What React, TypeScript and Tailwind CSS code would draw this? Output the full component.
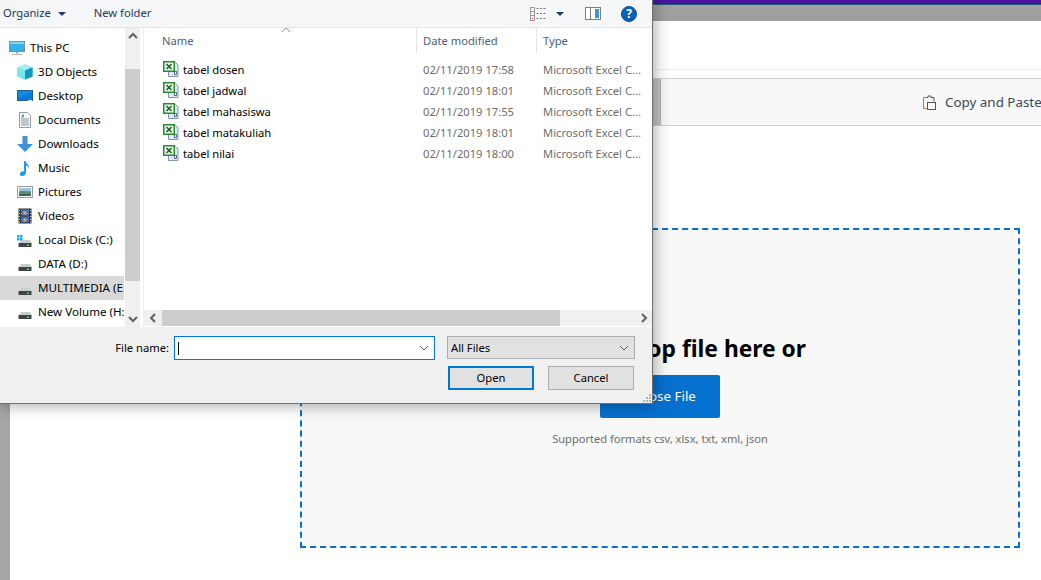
import type { ReactNode } from 'react';

const Chevron = ({ d, stroke = '#606060', width = 2 }: { d: string; stroke?: string; width?: number }) => (
  <svg className="w-[10px] h-[10px]" viewBox="0 0 10 10" fill="none" stroke={stroke} strokeWidth={width}>
    <path d={d} />
  </svg>
);

const ExcelIcon = () => (
  <svg className="w-4 h-4 shrink-0" viewBox="0 0 16 16">
    <path d="M5.500 1.500h7l2.500 2.500v11.500H5.500z" fill="#dfe8f5" stroke="#7f93b3" />
    <path d="M11 12h3" stroke="#6b88b5" />
    <rect x="11.500" y="10.500" width="2" height="3" fill="#fff" stroke="#3c5278" strokeWidth="0.8" />
    <rect x="0.750" y="0.750" width="10.500" height="9.500" fill="#eef8e6" stroke="#2c8a34" strokeWidth="1.500" />
    <path d="M3.500 3l5 5M8.500 3l-5 5" stroke="#14602a" strokeWidth="1.500" />
  </svg>
);

const PcIcon = () => (
  <svg className="w-4 h-4 shrink-0" viewBox="0 0 16 16">
    <rect x="0.500" y="1.500" width="15" height="10" fill="#35b2ea" stroke="#7c8c99" />
    <rect x="1" y="2" width="14" height="2" fill="#7fd4f5" />
    <path d="M7 12h2v1.500H7z" fill="#9aa7b0" />
    <path d="M3 14h10v1H3z" fill="#a9b5bd" />
  </svg>
);

const CubeIcon = () => (
  <svg className="w-4 h-4 shrink-0" viewBox="0 0 16 16">
    <path d="M8 .5l7.500 3v9L8 15.500.5 12.500v-9z" fill="#2fc0d8" />
    <path d="M.5 3.500L8 6.500v9L.5 12.500z" fill="#7fe3ee" />
    <path d="M8 .5l7.500 3L8 6.500.5 3.500z" fill="#a4eef5" />
    <path d="M8 6.500l7.500-3v9L8 15.500z" fill="#129ab8" />
  </svg>
);

const DesktopIcon = () => (
  <svg className="w-4 h-4 shrink-0" viewBox="0 0 16 16">
    <rect x="0.500" y="2.500" width="15" height="10" fill="#0f8fe8" stroke="#2a5a85" />
    <path d="M1 10l14-6v8H1z" fill="#0a78d6" />
    <path d="M11 12h4v1h-4z" fill="#cfe3f2" />
  </svg>
);

const DocIcon = () => (
  <svg className="w-4 h-4 shrink-0" viewBox="0 0 16 16">
    <path d="M2.500.5h8l3 3v12h-11z" fill="#fff" stroke="#8f9aa5" />
    <path d="M4 5h3M4 7h8M4 9h8M4 11h8M4 13h8" stroke="#7c8ea3" />
    <path d="M5 2.500h2v2H5z" fill="#3d8fd8" />
  </svg>
);

const DownloadIcon = () => (
  <svg className="w-4 h-4 shrink-0" viewBox="0 0 16 16">
    <path d="M5.500 0h5v8H16l-8 8-8-8h5.500z" fill="#3f93dc" />
  </svg>
);

const MusicIcon = () => (
  <svg className="w-4 h-4 shrink-0" viewBox="0 0 16 16">
    <path d="M7 1h1.500c.5 2.500 4 3.500 3.500 8-.3-2-2-3.500-3-3.500V12.500C9 14.500 7 16 5 16s-2.500-1.500-2-2.500C3.500 12 5.500 11 7 11.500z" fill="#1d9be8" />
  </svg>
);

const PictureIcon = () => (
  <svg className="w-4 h-4 shrink-0" viewBox="0 0 16 16">
    <rect x="0.500" y="2.500" width="15" height="11" fill="#fff" stroke="#9a9a9a" />
    <rect x="2" y="4" width="12" height="4" fill="#9cc3dc" />
    <path d="M2 8c3-2 6 0 12-1v5H2z" fill="#5e8a70" />
    <path d="M2 10h12v2H2z" fill="#46606a" />
  </svg>
);

const VideoIcon = () => (
  <svg className="w-4 h-4 shrink-0" viewBox="0 0 16 16">
    <rect x="1.500" y="0.500" width="13" height="15" fill="#333" />
    <rect x="4" y="1.500" width="8" height="6" fill="#4a76c4" />
    <rect x="4" y="8.500" width="8" height="6" fill="#3f6fd0" />
    <circle cx="8" cy="5" r="1.800" fill="#e0b030" />
    <circle cx="8" cy="12" r="1.800" fill="#d8a838" />
    <path d="M2.500 2v1M2.500 5v1M2.500 8v1M2.500 11v1M2.500 13.500v1M13.500 2v1M13.500 5v1M13.500 8v1M13.500 11v1M13.500 13.500v1" stroke="#ddd" />
  </svg>
);

const DriveIcon = ({ windows = false }: { windows?: boolean }) => (
  <svg className="w-4 h-4 shrink-0" viewBox="0 0 16 16">
    <path d="M2 11l2-3h9l2 3z" fill="#c9ccce" />
    <rect x="1.500" y="11" width="13" height="4" rx="0.500" fill="#3f4446" />
    <rect x="10" y="12.500" width="2" height="1.500" fill="#4ddb4d" />
    {windows && (
      <g fill="#16a8ee">
        <rect x="0" y="3" width="2.500" height="2.500" />
        <rect x="3" y="3" width="2.500" height="2.500" />
        <rect x="0" y="6" width="2.500" height="2.500" />
        <rect x="3" y="6" width="2.500" height="2.500" />
      </g>
    )}
  </svg>
);

const navItems: { label: string; icon: ReactNode; top?: boolean; selected?: boolean }[] = [
  { label: 'This PC', icon: <PcIcon />, top: true },
  { label: '3D Objects', icon: <CubeIcon /> },
  { label: 'Desktop', icon: <DesktopIcon /> },
  { label: 'Documents', icon: <DocIcon /> },
  { label: 'Downloads', icon: <DownloadIcon /> },
  { label: 'Music', icon: <MusicIcon /> },
  { label: 'Pictures', icon: <PictureIcon /> },
  { label: 'Videos', icon: <VideoIcon /> },
  { label: 'Local Disk (C:)', icon: <DriveIcon windows /> },
  { label: 'DATA (D:)', icon: <DriveIcon /> },
  { label: 'MULTIMEDIA (E:)', icon: <DriveIcon />, selected: true },
  { label: 'New Volume (H:)', icon: <DriveIcon /> },
];

const files = [
  { name: 'tabel dosen', date: '02/11/2019 17:58' },
  { name: 'tabel jadwal', date: '02/11/2019 18:01' },
  { name: 'tabel mahasiswa', date: '02/11/2019 17:55' },
  { name: 'tabel matakuliah', date: '02/11/2019 18:01' },
  { name: 'tabel nilai', date: '02/11/2019 18:00' },
];

function FileDialog() {
  return (
    <div className="absolute top-0 left-0 z-10 w-[653px] h-[404px] flex flex-col bg-[#f0f0f0] border-r border-b border-[#707070] shadow-[0_0_16px_rgba(0,0,0,0.4)] text-[11.2px] text-black">
      {/* Toolbar */}
      <div className="h-[28px] shrink-0 flex items-center bg-[#f5f6f7] border-b border-[#e5e5e5] text-[#1e395b]">
        <span className="ml-[3px]">Organize</span>
        <svg className="ml-[7px] w-[8px] h-[4px]" viewBox="0 0 8 4"><path d="M0 0h8L4 4z" fill="#1e395b" /></svg>
        <span className="ml-[28px]">New folder</span>
        <svg className="ml-auto w-4 h-4" viewBox="0 0 16 16" fill="none">
          <rect x="0.500" y="1.500" width="4" height="13" stroke="#999" />
          <path d="M0.500 5.500h4M0.500 9.500h4" stroke="#999" />
          <path d="M2 12h1v1H2z" fill="#c33" />
          <path d="M6.500 2.500h2M10 2.500h2M13.500 2.500h2M6.500 7.500h2M10 7.500h2M13.500 7.500h2M6.500 12.500h2M10 12.500h2M13.500 12.500h2" stroke="#777" />
        </svg>
        <svg className="ml-[10px] w-[8px] h-[4px]" viewBox="0 0 8 4"><path d="M0 0h8L4 4z" fill="#1e395b" /></svg>
        <svg className="ml-[21px] w-4 h-[13px]" viewBox="0 0 16 13">
          <rect x="0.500" y="0.500" width="15" height="12" fill="#fff" stroke="#7d7d7d" />
          <rect x="5" y="1" width="1" height="11" fill="#7d7d7d" />
          <rect x="10" y="2" width="4" height="9" fill="#3a95e0" />
        </svg>
        <div className="ml-[20px] mr-[15px] w-4 h-4 rounded-full bg-[#0a62b8] border border-[#0b4f96] text-white text-[12px] leading-none font-bold flex items-center justify-center">?</div>
      </div>

      {/* Navigation and file list */}
      <div className="flex-1 min-h-0 flex bg-white">
        <div className="w-[124px] mr-px shrink-0 pt-[8px] overflow-hidden text-[11.6px]">
          {navItems.map((item) => (
            <div
              key={item.label}
              className={`h-6 flex items-center whitespace-nowrap gap-[5px] ${item.top ? 'pl-[9px]' : 'pl-[17px]'} ${item.selected ? 'bg-[#d9d9d9]' : ''}`}
            >
              {item.icon}
              <span>{item.label}</span>
            </div>
          ))}
        </div>

        <div className="w-[15px] shrink-0 flex flex-col bg-[#f0f0f0]">
          <div className="h-[41px] pt-[3px] flex justify-center"><Chevron d="M1 7l4-4 4 4" /></div>
          <div className="h-[212px] bg-[#cdcdcd]" />
          <div className="flex-1 flex items-end justify-center pb-[3px]"><Chevron d="M1 3l4 4 4-4" /></div>
        </div>

        <div className="flex-1 min-w-0 ml-[3px] border-l border-[#f0f0f0] flex flex-col relative">
          <svg className="absolute top-[-1px] left-[137px] w-[10px] h-[6px]" viewBox="0 0 10 6" fill="none" stroke="#9a9a9a">
            <path d="M1 5l4-4 4 4" />
          </svg>
          <div className="h-[25px] flex text-[#4c607a]">
            <div className="w-[273px] pl-[18px] pt-px flex items-center border-r border-[#e5e5e5]">Name</div>
            <div className="w-[120px] pl-[6px] pt-px flex items-center border-r border-[#e5e5e5]">Date modified</div>
            <div className="pl-[6px] pt-px flex items-center">Type</div>
          </div>
          <div className="flex-1 pt-[6px]">
            {files.map((file) => (
              <div key={file.name} className="h-[21px] flex items-center">
                <div className="w-[273px] pl-[19px] flex items-center gap-1">
                  <ExcelIcon />
                  <span className="pt-px">{file.name}</span>
                </div>
                <div className="w-[120px] pl-[6px] pt-px text-[#6d6d6d]">{file.date}</div>
                <div className="pl-[6px] pt-px text-[#6d6d6d] whitespace-nowrap">Microsoft Excel C...</div>
              </div>
            ))}
          </div>
          <div className="h-[16px] mb-px shrink-0 flex bg-[#f0f0f0]">
            <div className="w-[18px] flex items-center justify-center"><Chevron d="M7 1L3 5l4 4" /></div>
            <div className="w-[398px] bg-[#cdcdcd]" />
            <div className="flex-1 flex items-center justify-end pr-[3px]"><Chevron d="M3 1l4 4-4 4" /></div>
          </div>
        </div>
      </div>

      {/* File name, type and buttons */}
      <div className="h-[76px] shrink-0 relative pt-[9px]">
        <div className="flex items-start">
          <label className="w-[169px] h-6 flex items-center justify-end">File name:</label>
          <div className="ml-[5px] w-[261px] h-6 bg-white border border-[#0078d7] flex items-center justify-between pl-[3px] pr-[5px]">
            <div className="w-px h-[13px] bg-black" />
            <Chevron d="M1 3l4 4 4-4" stroke="#555" width={1} />
          </div>
          <div className="ml-[12px] w-[188px] h-[23px] bg-[#e1e1e1] border border-[#adadad] flex items-center justify-between pl-[3px] pr-[5px]">
            <span className="pt-px">All Files</span>
            <Chevron d="M1 3l4 4 4-4" stroke="#555" width={1} />
          </div>
        </div>
        <div className="mt-[6px] flex">
          <button className="ml-[448px] w-[86px] h-6 bg-[#e1e1e1] border-2 border-[#0078d7]">Open</button>
          <button className="ml-[14px] w-[86px] h-6 bg-[#e1e1e1] border border-[#adadad]">Cancel</button>
        </div>
        <svg className="absolute right-[1px] bottom-[1px] w-[9px] h-[9px]" viewBox="0 0 9 9" fill="#b5b5b5">
          <path d="M7 1h2v2H7zM4 4h2v2H4zM7 4h2v2H7zM1 7h2v2H1zM4 7h2v2H4zM7 7h2v2H7z" />
        </svg>
      </div>
    </div>
  );
}

export default function App() {
  return (
    <div className="relative w-[1041px] h-[580px] overflow-hidden flex flex-col bg-white font-['Noto_Sans',sans-serif]">
      <FileDialog />

      <div className="h-[5px] shrink-0 bg-[#4a149c] border-b border-[#1f5a6e]" />
      <div className="h-4 shrink-0 bg-[#a0a0a0]" />

      <div className="flex-1 min-h-0 flex">
        <div className="w-[10px] shrink-0 bg-[#a6a6a6]" />
        <div className="flex-1 min-w-0">
          <div className="h-[49px] border-b border-[#eeeeee]" />
          <div className="mt-2 h-[48px] flex items-stretch bg-[#f8f8f8] border-y border-[#cccccc]">
            <div className="w-[651px] shrink-0 bg-[#c4c4c4] border-r border-[#b5b5b5]" />
            <div className="ml-[261px] pt-px flex items-center gap-[7px] whitespace-nowrap text-[13.4px] text-[#3b4a5a]">
              <svg className="w-4 h-[16px] shrink-0" viewBox="0 0 16 16" fill="none" stroke="#555" strokeWidth="1">
                <path d="M4.500 2.500H1.500v11h3" stroke="#b8763a" />
                <path d="M4.500 2.500h1.500V1h3v1.500h3v4" />
                <rect x="5.500" y="7.500" width="8" height="7" />
              </svg>
              <span>Copy and Paste</span>
            </div>
          </div>

          {/* Drop area */}
          <div className="mt-[102px] ml-[290px] w-[720px] h-[320px] bg-[#f8f8f8] border-2 border-dashed border-[#0670cf] flex flex-col items-center pt-[103px]">
            <h2 className="text-[22.8px] leading-[32px] font-bold text-black whitespace-nowrap">Drag and drop file here or</h2>
            <button className="mt-[10px] w-[120px] h-[43px] rounded-[2px] bg-[#0670cf] text-white text-[13.4px]">Choose File</button>
            <p className="mt-[13px] text-[11.1px] text-[#6d6d6d]">Supported formats csv, xlsx, txt, xml, json</p>
          </div>
        </div>
      </div>
    </div>
  );
}
